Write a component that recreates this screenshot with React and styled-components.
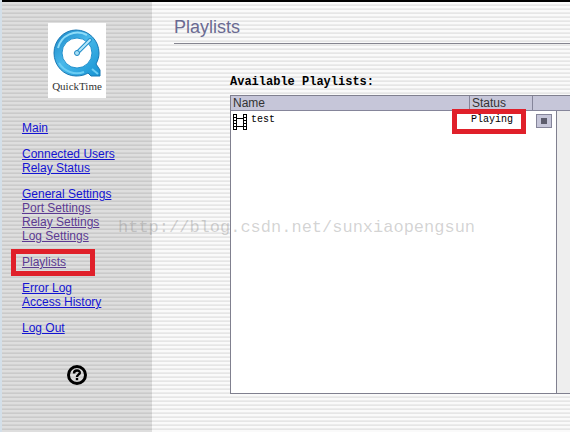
import React from 'react';
import styled, { createGlobalStyle } from 'styled-components';

const linkGroups = [
  [{ label: 'Main' }],
  [{ label: 'Connected Users' }, { label: 'Relay Status' }],
  [
    { label: 'General Settings' },
    { label: 'Port Settings', visited: true },
    { label: 'Relay Settings', visited: true },
    { label: 'Log Settings', visited: true },
  ],
  [{ label: 'Playlists', visited: true, marked: true }],
  [{ label: 'Error Log' }, { label: 'Access History' }],
  [{ label: 'Log Out' }],
];

const App = () => {
  return (
    <>
      <GlobalStyle />
      <Page>
        <Sidebar>
          <Logo>
            <QuickTimeMark />
            <LogoName>QuickTime</LogoName>
          </Logo>
          <Nav>
            {linkGroups.map((group) => (
              <LinkGroup key={group[0].label}>
                {group.map((link) => (
                  <LinkItem key={link.label}>
                    <NavLink href='#' $visited={link.visited}>
                      {link.label}
                    </NavLink>
                    {link.marked && <NavMark />}
                  </LinkItem>
                ))}
              </LinkGroup>
            ))}
          </Nav>
          <HelpButton aria-label='Help'>
            <HelpIcon />
          </HelpButton>
        </Sidebar>
        <Content>
          <Title>Playlists</Title>
          <Section>
            <SectionTitle id='playlists-title'>Available Playlists:</SectionTitle>
            <Table aria-labelledby='playlists-title'>
              <colgroup>
                <col />
                <StatusCol />
                <ActionCol />
                <TrackCol />
              </colgroup>
              <thead>
                <tr>
                  <HeadCell>Name</HeadCell>
                  <HeadCell>Status</HeadCell>
                  <HeadCell colSpan={2} />
                </tr>
              </thead>
              <tbody>
                <Row>
                  <Cell>
                    <Playlist>
                      <FilmIcon />
                      <span>test</span>
                    </Playlist>
                  </Cell>
                  <Cell>
                    <Status>Playing</Status>
                    <StatusMark />
                  </Cell>
                  <Cell>
                    <StopButton aria-label='Stop'>
                      <StopIcon />
                    </StopButton>
                  </Cell>
                  <ScrollTrack rowSpan={2} />
                </Row>
                <EmptyRow>
                  <td colSpan={3} />
                </EmptyRow>
              </tbody>
            </Table>
          </Section>
        </Content>
        <Watermark>http://blog.csdn.net/sunxiaopengsun</Watermark>
      </Page>
    </>
  );
};

const QuickTimeMark = () => (
  <svg width='48' height='48' viewBox='0 0 48 48' aria-hidden='true'>
    <defs>
      <linearGradient id='ring' x1='0' y1='0' x2='1' y2='1'>
        <stop offset='0' stopColor='#1682c4' />
        <stop offset='0.45' stopColor='#48b8ea' />
        <stop offset='1' stopColor='#1593d2' />
      </linearGradient>
    </defs>
    <path
      d='M23 1A22 23 0 1 0 23 47C28 47 32 46 35 44L38 47H47V41L43 35C45 31 46 28 46 24A23 23 0 0 0 23 1Z'
      fill='url(#ring)'
      stroke='#1878b4'
    />
    <path d='M5 19A20 20 0 0 1 34 6' fill='none' stroke='#8edcf8' strokeWidth='2' />
    <path d='M6 34A21 21 0 0 0 31 43M39 40L45 45' fill='none' stroke='#6bcdf4' strokeWidth='2' />
    <circle cx='24' cy='24' r='15' fill='#fff' stroke='#2492ce' />
    <path d='M24 24L37 11' stroke='#238fca' strokeWidth='4' strokeLinecap='round' />
    <path d='M25 23L37 11' stroke='#b5e7fa' strokeWidth='2' strokeLinecap='round' />
    <circle cx='24' cy='24' r='2.5' fill='#a6dff6' stroke='#1c84c0' />
  </svg>
);

const HelpIcon = () => (
  <svg width='20' height='20' viewBox='0 0 20 20' aria-hidden='true'>
    <circle cx='10' cy='10' r='8.5' fill='none' stroke='#000' strokeWidth='3' />
    <path
      d='M7 8.5C7 4.500 13.200 4.800 12.800 8C12.500 9.800 10 9.600 10 12'
      fill='none'
      stroke='#000'
      strokeWidth='2.4'
    />
    <rect x='8.8' y='13' width='2.4' height='2.2' />
  </svg>
);

const FilmIcon = () => (
  <svg width='14' height='16' viewBox='0 0 14 16' aria-hidden='true'>
    <rect width='14' height='16' fill='#000' />
    <path d='M4 0H10V4H4ZM4 5H10V12H4ZM4 13H10V16H4Z' fill='#fff' />
    <path d='M2 1V16M12 1V16' stroke='#fff' strokeWidth='2' strokeDasharray='2 1' />
  </svg>
);

const StopIcon = () => (
  <svg width='6' height='6' viewBox='0 0 6 6' aria-hidden='true'>
    <rect width='6' height='6' fill='#5c5c6c' />
  </svg>
);

const GlobalStyle = createGlobalStyle`
  * {
    box-sizing: border-box;
  }

  body {
    margin: 0;
    font-family: 'Liberation Sans', Arial, sans-serif;
    font-size: 12px;
    background: #d3dfe9;
  }
`;

const Page = styled.div`
  position: relative;
  display: flex;
  min-height: 100vh;
  margin-left: 2px;
  border-top: 2px solid #000;
  background: repeating-linear-gradient(#fafafa 0 2px, #ececec 2px 3px, #e6e6e6 3px 4px);
`;

const Sidebar = styled.aside`
  display: flex;
  flex-direction: column;
  align-items: center;
  flex: none;
  width: 150px;
  padding-top: 21px;
  background: repeating-linear-gradient(#dedede 0 2px, #d2d2d2 2px 3px, #cacaca 3px 4px);
`;

const Logo = styled.div`
  display: flex;
  flex-direction: column;
  align-items: center;
  width: 58px;
  height: 75px;
  padding-top: 6px;
  background: #fff;
`;

const LogoName = styled.span`
  font-family: 'Liberation Serif', 'Times New Roman', serif;
  font-size: 11px;
  line-height: 18px;
  color: #333;
`;

const Nav = styled.nav`
  display: flex;
  flex-direction: column;
  align-self: stretch;
  gap: 12px;
  margin-top: 23px;
  padding-left: 20px;
`;

const LinkGroup = styled.ul`
  margin: 0;
  padding: 0;
  list-style: none;
`;

const LinkItem = styled.li`
  position: relative;
  line-height: 14px;
`;

const NavLink = styled.a`
  color: ${({ $visited }) => ($visited ? '#5c3a92' : '#1414d2')};
`;

const Mark = styled.span`
  position: absolute;
  border: 5px solid #e0202a;
  pointer-events: none;
`;

const NavMark = styled(Mark)`
  top: -6px;
  left: -11px;
  width: 84px;
  height: 27px;
`;

const HelpButton = styled.button`
  display: flex;
  margin-top: 30px;
  padding: 0;
  border: 0;
  background: none;
`;

const Content = styled.main`
  flex: 1;
  min-width: 0;
  padding: 14px 0 38px 22px;
`;

const Title = styled.h1`
  margin: 0;
  padding-bottom: 4px;
  border-bottom: 1px solid #85858f;
  font-size: 18px;
  font-weight: 400;
  line-height: 23px;
  color: #6a6a92;
`;

const Section = styled.section`
  padding: 31px 0 0 56px;
`;

const SectionTitle = styled.h2`
  margin: 0 0 6px;
  font-family: 'Liberation Mono', 'Courier New', monospace;
  font-size: 12px;
  line-height: 14px;
  color: #000;
`;

const Table = styled.table`
  width: 100%;
  table-layout: fixed;
  border-collapse: separate;
  border-spacing: 0;
  border: solid #80808f;
  border-width: 1px 0 1px 1px;
  background: #fff;
`;

const StatusCol = styled.col`
  width: 63px;
`;

const ActionCol = styled.col`
  width: 24px;
`;

const TrackCol = styled.col`
  width: 14px;
`;

const HeadCell = styled.th`
  height: 15px;
  padding: 0 2px;
  border-bottom: 1px solid #85859a;
  background: #c6c6d9;
  font-weight: 400;
  line-height: 14px;
  text-align: left;
  color: #333;

  & + & {
    border-left: 1px solid #85859a;
  }
`;

const Row = styled.tr`
  height: 24px;
`;

const EmptyRow = styled.tr`
  height: 258px;
`;

const Cell = styled.td`
  position: relative;
  padding: 3px 2px 0;
  vertical-align: top;
  font-family: 'Liberation Mono', 'Courier New', monospace;
  font-size: 10px;
  line-height: 12px;
`;

const Playlist = styled.div`
  display: flex;
  gap: 4px;
`;

const Status = styled.span`
  display: block;
`;

const StatusMark = styled(Mark)`
  top: -2px;
  left: -17px;
  width: 74px;
  height: 25px;
`;

const StopButton = styled.button`
  display: flex;
  align-items: center;
  justify-content: center;
  width: 16px;
  height: 14px;
  margin-left: 2px;
  padding: 0;
  border: 1px solid #85859a;
  background: #c6c6d9;
`;

const ScrollTrack = styled.td`
  padding: 0;
  border-left: 1px solid #80808f;
  background: #eee;
`;

const Watermark = styled.span`
  position: absolute;
  top: 214px;
  left: 116px;
  font-family: 'Liberation Mono', 'Courier New', monospace;
  font-size: 17px;
  line-height: 24px;
  color: rgba(130, 130, 130, 0.35);
  pointer-events: none;
`;

export default App;
